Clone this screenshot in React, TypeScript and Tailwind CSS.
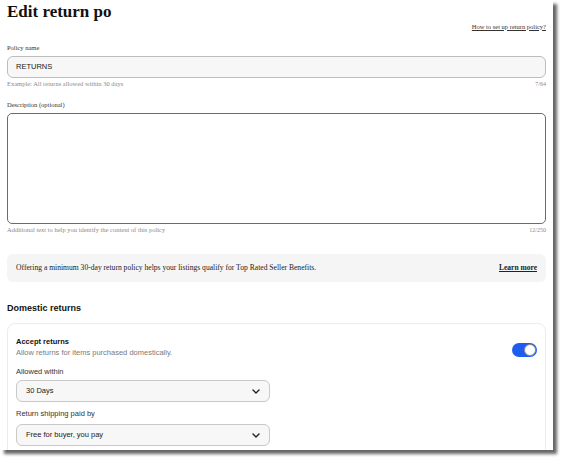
import React from "react";

const serif = { fontFamily: '"Liberation Serif", "Times New Roman", serif' };
const sans = { fontFamily: '"Liberation Sans", Arial, sans-serif' };

function Chevron() {
  return (
    <svg width="8" height="5" viewBox="0 0 8 5" className="shrink-0">
      <path d="M1 1 L4 4 L7 1" fill="none" stroke="#222" strokeWidth="1.4" strokeLinecap="round" strokeLinejoin="round" />
    </svg>
  );
}

function Select({ value, className = "" }: { value: string; className?: string }) {
  return (
    <div
      className={`flex h-[22px] w-[254px] items-center justify-between rounded-[6px] border border-[#c9c9c9] bg-[#f7f7f7] pl-[9px] pr-[9px] text-[7.5px] text-[#191919] ${className}`}
      style={sans}
    >
      <span>{value}</span>
      <Chevron />
    </div>
  );
}

function Toggle() {
  return (
    <div className="mt-[6px] flex h-[14px] w-[25px] shrink-0 items-center justify-end rounded-full bg-[#1f5cf0] p-[1px]">
      <div className="h-[12px] w-[12px] rounded-full border border-[#8a8a8a] bg-white" />
    </div>
  );
}

export default function App() {
  return (
    <div className="h-[463px] w-[566px] overflow-hidden bg-white">
      <div className="h-[450px] w-[553px] overflow-hidden bg-white pl-[7px] pr-[7px] shadow-[4px_4px_3px_rgba(0,0,0,0.6)]">
        {/* Heading */}
        <div className="h-[22px] pt-[3px]">
          <div className="whitespace-nowrap text-[17px] font-bold leading-none text-[#111]" style={serif}>
            Edit return po
          </div>
        </div>

        <div className="mt-[1px] flex h-[8px] items-center justify-end text-[6.5px] leading-none text-[#333]" style={serif}>
          <span className="underline">How to set up return policy?</span>
        </div>

        {/* Policy name */}
        <div className="mt-[13px] flex h-[8px] items-center text-[6.5px] leading-none text-[#333]" style={serif}>
          Policy name
        </div>
        <div
          className="mt-[4px] flex h-[22px] items-center rounded-[6px] border border-[#bdbdbd] bg-[#f7f7f7] pl-[8px] text-[7.5px] text-[#191919]"
          style={sans}
        >
          RETURNS
        </div>
        <div className="mt-[2px] flex h-[8px] items-center justify-between text-[6.5px] leading-none text-[#8a8a8a]" style={serif}>
          <span>Example: All returns allowed within 30 days</span>
          <span className="text-[6px]">7/64</span>
        </div>

        {/* Description */}
        <div className="mt-[13px] flex h-[8px] items-center text-[6.5px] leading-none text-[#333]" style={serif}>
          Description (optional)
        </div>
        <div className="mt-[4px] h-[111px] rounded-[5px] border-[1.5px] border-[#6b6b6b] bg-white" />
        <div className="mt-[2px] flex h-[8px] items-center justify-between text-[6.5px] leading-none text-[#8a8a8a]" style={serif}>
          <span>Additional text to help you identify the content of this policy</span>
          <span className="text-[6px]">12/250</span>
        </div>

        {/* Top Rated notice */}
        <div
          className="mt-[20px] flex h-[28px] items-center justify-between rounded-[6px] bg-[#f5f5f5] pl-[9px] pr-[9px] text-[7.6px] leading-none text-[#222]"
          style={serif}
        >
          <span>Offering a minimum 30-day return policy helps your listings qualify for Top Rated Seller Benefits.</span>
          <span className="text-[7.5px] font-bold underline">Learn more</span>
        </div>

        {/* Domestic returns */}
        <div className="mt-[20px] flex h-[12px] items-center text-[9px] font-bold leading-none text-[#111]" style={sans}>
          Domestic returns
        </div>

        <div className="mt-[9px] h-[200px] rounded-[8px] border border-[#ececec] pl-[8px] pr-[8px] pt-[13px]" style={sans}>
          <div className="flex items-start justify-between">
            <div>
              <div className="flex h-[10px] items-center text-[7.5px] font-bold leading-none text-[#111]">Accept returns</div>
              <div className="mt-[1px] flex h-[10px] items-center text-[7.5px] leading-none text-[#7a7a7a]">
                Allow returns for items purchased domestically.
              </div>
            </div>
            <Toggle />
          </div>

          <div className="mt-[9px] flex h-[10px] items-center text-[7.5px] leading-none text-[#333]">Allowed within</div>
          <Select value="30 Days" className="mt-[3px]" />

          <div className="mt-[7px] flex h-[10px] items-center text-[7.5px] leading-none text-[#333]">Return shipping paid by</div>
          <Select value="Free for buyer, you pay" className="mt-[5px]" />
        </div>
      </div>
    </div>
  );
}
